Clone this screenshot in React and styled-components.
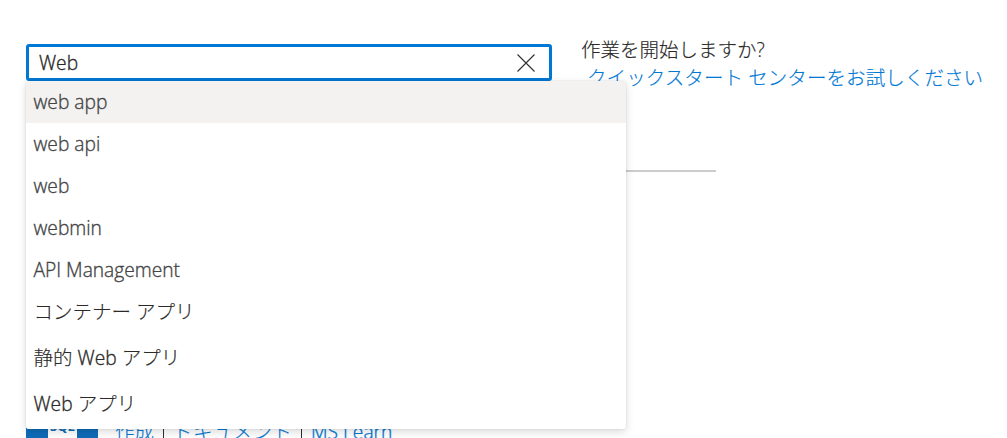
import React from 'react';
import styled, { createGlobalStyle } from 'styled-components';

const suggestions = [
    { text: 'web app' },
    { text: 'web api' },
    { text: 'web' },
    { text: 'webmin' },
    { text: 'API Management' },
    { text: 'コンテナー アプリ', tall: true },
    { text: '静的 Web アプリ', tall: true },
    { text: 'Web アプリ', tall: true },
];

// latin words use a slightly heavier stroke than the kana and kanji around them
const MixedText = ({ text }) =>
    text.split(/([A-Za-z]+(?: [A-Za-z]+)*)/).map((part, index) =>
        index % 2 ? <Latin key={index}>{part}</Latin> : part
    );

const App = () => {
    return (
        <Page>
            <GlobalStyle />
            <Header>
                <SearchArea>
                    <SearchBox>
                        <Latin>Web</Latin>
                        <ClearIcon viewBox="0 0 18 18">
                            <path d="M0.5 0.5 L17.5 17.5 M17.5 0.5 L0.5 17.5" />
                        </ClearIcon>
                    </SearchBox>
                    <Menu>
                        {suggestions.map((item, index) => (
                            <MenuItem key={item.text} $active={index === 0} $tall={item.tall}>
                                <Label>
                                    <MixedText text={item.text} />
                                </Label>
                            </MenuItem>
                        ))}
                    </Menu>
                </SearchArea>
                <Help>
                    <Label>作業を開始しますか?</Label>
                    <HelpLink $spacing={0.08}>クイックスタート センターをお試しください</HelpLink>
                </Help>
            </Header>
            <Divider />
            <Product>
                <Tile>
                    <SqlIcon viewBox="0 0 29 80">
                        <path d="M0 16 C0 8 29 8 29 16 V80 H0 Z" fill="#fff" />
                        <text x="14.5" y="65" textAnchor="middle">SQL</text>
                    </SqlIcon>
                </Tile>
                <Links>
                    <LinkLabel $spacing={0.1}>作成</LinkLabel>
                    <Bar />
                    <LinkLabel $spacing={0.3}>ドキュメント</LinkLabel>
                    <Bar />
                    <LinkLabel>
                        <MixedText text="MS Learn" />
                    </LinkLabel>
                </Links>
            </Product>
        </Page>
    );
};

export default App;

const GlobalStyle = createGlobalStyle`
    body {
        margin: 0;
        background: #fff;
    }

    * {
        box-sizing: border-box;
    }
`;

const Page = styled.div`
    width: 1007px;
    height: 438px;
    padding: 36px 0 0 26px;
    overflow: hidden;
    color: #292827;
    font-family: 'Open Sans', 'Noto Sans CJK JP', sans-serif;
    font-size: 19.5px;
    font-weight: 300;
    -webkit-text-stroke-width: 0.15px;
`;

const Header = styled.div`
    display: flex;
    align-items: flex-start;
    gap: 29px;
    height: 134px;
`;

const SearchArea = styled.div`
    position: relative;
    width: 526px;
    padding-top: 8px;
`;

const SearchBox = styled.div`
    display: flex;
    align-items: center;
    justify-content: space-between;
    height: 37px;
    padding: 0 14px 0 10px;
    border: 3px solid #0078d4;
    border-radius: 3px;
    background: #fff;
`;

const Latin = styled.span`
    font-size: 19.2px;
    letter-spacing: 0;
    -webkit-text-stroke-width: 0.35px;
`;

const ClearIcon = styled.svg`
    width: 18px;
    height: 18px;
    fill: none;
    stroke: #323130;
    stroke-width: 1.1;
`;

const Menu = styled.div`
    position: absolute;
    top: 45px;
    left: 0;
    width: 600px;
    height: 348px;
    overflow: hidden;
    background: #fff;
    border-radius: 3px;
    color: #444;
    box-shadow: 0 0 2px rgba(0, 0, 0, 0.14), 0 3px 8px rgba(0, 0, 0, 0.14);
`;

const MenuItem = styled.div`
    display: flex;
    align-items: center;
    height: ${(props) => (props.$tall ? 46 : 42)}px;
    padding: 0 8px ${(props) => (props.$tall ? 5 : 0)}px 7.5px;
    color: ${(props) => (props.$tall ? '#2b2a29' : 'inherit')};
    background: ${(props) => (props.$active ? '#f3f2f1' : '#fff')};
`;

const Label = styled.span`
    line-height: 28px;
    letter-spacing: ${(props) => props.$spacing || 0}px;
    white-space: nowrap;
`;

const Help = styled.div`
    display: flex;
    flex-direction: column;
`;

const HelpLink = styled(Label)`
    margin-left: 6px;
    color: #0078d4;
`;

const Divider = styled.div`
    width: 690px;
    height: 2px;
    background: #ccc;
`;

const Product = styled.div`
    display: flex;
    align-items: flex-end;
    gap: 17px;
    height: 274px;
`;

const Tile = styled.div`
    display: flex;
    justify-content: center;
    width: 72px;
    height: 80px;
    background: #0f6cb8;
`;

const SqlIcon = styled.svg`
    width: 29px;
    height: 80px;

    text {
        fill: #0f6cb8;
        font-family: 'Open Sans', sans-serif;
        font-size: 13px;
        font-weight: 700;
    }
`;

const Links = styled.div`
    display: flex;
    align-items: center;
    gap: 9px;
    height: 29px;
`;

const LinkLabel = styled(Label)`
    color: #0078d4;
`;

const Bar = styled.span`
    width: 1px;
    height: 20px;
    background: #323130;
`;
